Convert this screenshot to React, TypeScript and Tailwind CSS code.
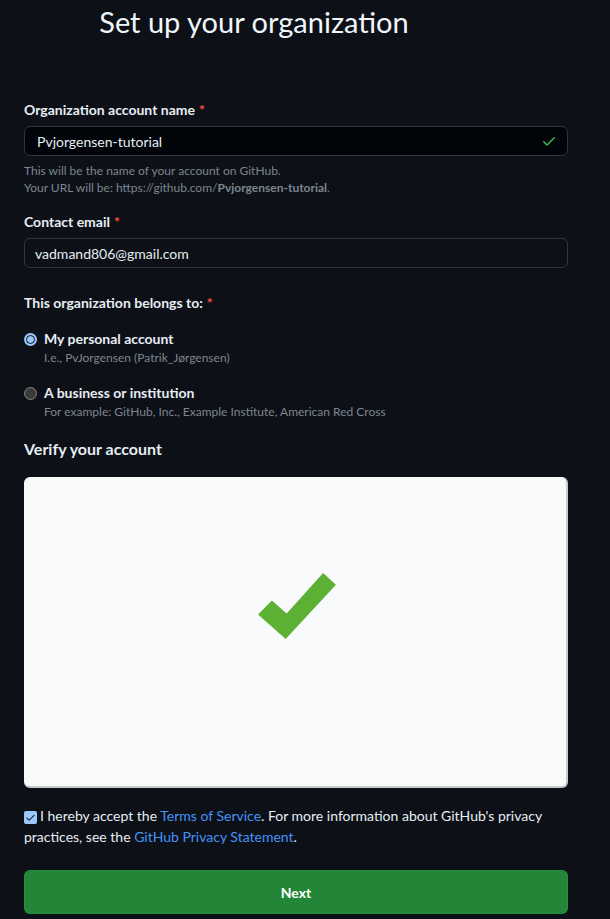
import React from "react";

function Star() {
  return <span className="text-[#f85149] ml-1">*</span>;
}

export default function App() {
  return (
    <div
      className="min-h-[919px] w-full bg-[#0d1117] text-[#e6edf3]"
      style={{ fontFamily: 'Lato, "Noto Sans", sans-serif' }}
    >
      <h1 className="w-[508px] text-center text-[29px] leading-[40px] font-normal text-[#f0f6fc] pt-[2px]">
        Set up your organization
      </h1>

      <div className="pl-6 pr-[42px]">
        <div className="mt-[58px]">
          <label className="block text-[14px] leading-[20px] font-bold text-[#e6edf3]">
            Organization account name
            <Star />
          </label>
          <div className="mt-[6px] h-[30px] rounded-[6px] border border-[#30363d] bg-[#010409] flex items-center pl-[12px] pr-[10px]">
            <span className="flex-1 text-[14px] text-[#e6edf3]">Pvjorgensen-tutorial</span>
            <svg width="16" height="16" viewBox="0 0 16 16" fill="#3fb950">
              <path d="M13.78 4.22a.75.75 0 0 1 0 1.06l-7.25 7.25a.75.75 0 0 1-1.06 0L2.22 9.28a.751.751 0 0 1 .018-1.042.751.751 0 0 1 1.042-.018L6 10.94l6.72-6.72a.75.75 0 0 1 1.06 0Z" />
            </svg>
          </div>
          <p className="mt-[6px] text-[12px] leading-[17px] text-[#7d8590]">
            This will be the name of your account on GitHub.
            <br />
            Your URL will be: https://github.com/<span className="font-bold">Pvjorgensen-tutorial</span>.
          </p>
        </div>

        <div className="mt-[16px]">
          <label className="block text-[14px] leading-[20px] font-bold text-[#e6edf3]">
            Contact email
            <Star />
          </label>
          <div className="mt-[6px] h-[30px] rounded-[6px] border border-[#30363d] bg-[#0d1117] flex items-center pl-[10px]">
            <span className="text-[14px] text-[#e6edf3]">vadmand806@gmail.com</span>
          </div>
        </div>

        <div className="mt-[25px]">
          <p className="text-[14px] leading-[20px] font-bold text-[#e6edf3]">
            This organization belongs to:
            <Star />
          </p>

          <div className="mt-[16px] flex gap-[7px]">
            <div className="mt-[4px] w-[13px] h-[13px] rounded-full bg-[#99c8ff] flex items-center justify-center shrink-0">
              <div className="w-[9px] h-[9px] rounded-full border-[1.5px] border-[#0d1117] bg-[#99c8ff]" />
            </div>
            <div>
              <p className="text-[14px] leading-[20px] font-bold">My personal account</p>
              <p className="text-[12px] leading-[17px] text-[#7d8590]">I.e., PvJorgensen (Patrik_Jørgensen)</p>
            </div>
          </div>

          <div className="mt-[17px] flex gap-[7px]">
            <div className="mt-[4px] w-[13px] h-[13px] rounded-full bg-[#3b3b3b] border border-[#858585] shrink-0" />
            <div>
              <p className="text-[14px] leading-[20px] font-bold">A business or institution</p>
              <p className="text-[12px] leading-[17px] text-[#7d8590]">
                For example: GitHub, Inc., Example Institute, American Red Cross
              </p>
            </div>
          </div>
        </div>

        <h2 className="mt-[17px] text-[16px] leading-[24px] font-bold text-[#e6edf3]">Verify your account</h2>

        <div className="mt-[16px] h-[311px] rounded-[6px] bg-[#f9fafb] border-r-2 border-b-2 border-[#c7c9cc] flex justify-center pt-[95px]">
          <svg width="80" height="68" viewBox="257 571 81 69" className="ml-[4px]">
            <polygon points="258,614 272,600 287,613 324,572 337,584 286,639" fill="#5cb135" />
          </svg>
        </div>

        <p className="mt-[17px] text-[14px] leading-[21px] text-[#e6edf3]">
          <span className="inline-flex align-[-2px] mr-[3px] w-[13px] h-[13px] rounded-[2px] bg-[#99c8ff] items-center justify-center">
            <svg width="11" height="11" viewBox="0 0 16 16" fill="#1b1f24">
              <path d="M13.78 4.22a.75.75 0 0 1 0 1.06l-7.25 7.25a.75.75 0 0 1-1.06 0L2.22 9.28a.751.751 0 0 1 1.06-1.06L6 10.94l6.72-6.72a.75.75 0 0 1 1.06 0Z" />
            </svg>
          </span>
          I hereby accept the <span className="text-[#4493f8]">Terms of Service</span>. For more information about GitHub's privacy
          practices, see the <span className="text-[#4493f8]">GitHub Privacy Statement</span>.
        </p>

        <button className="mt-[23px] w-full h-[44px] rounded-[6px] bg-[#238636] border border-[#2ea043]/40 text-white text-[14px] font-bold">
          Next
        </button>
      </div>
    </div>
  );
}
